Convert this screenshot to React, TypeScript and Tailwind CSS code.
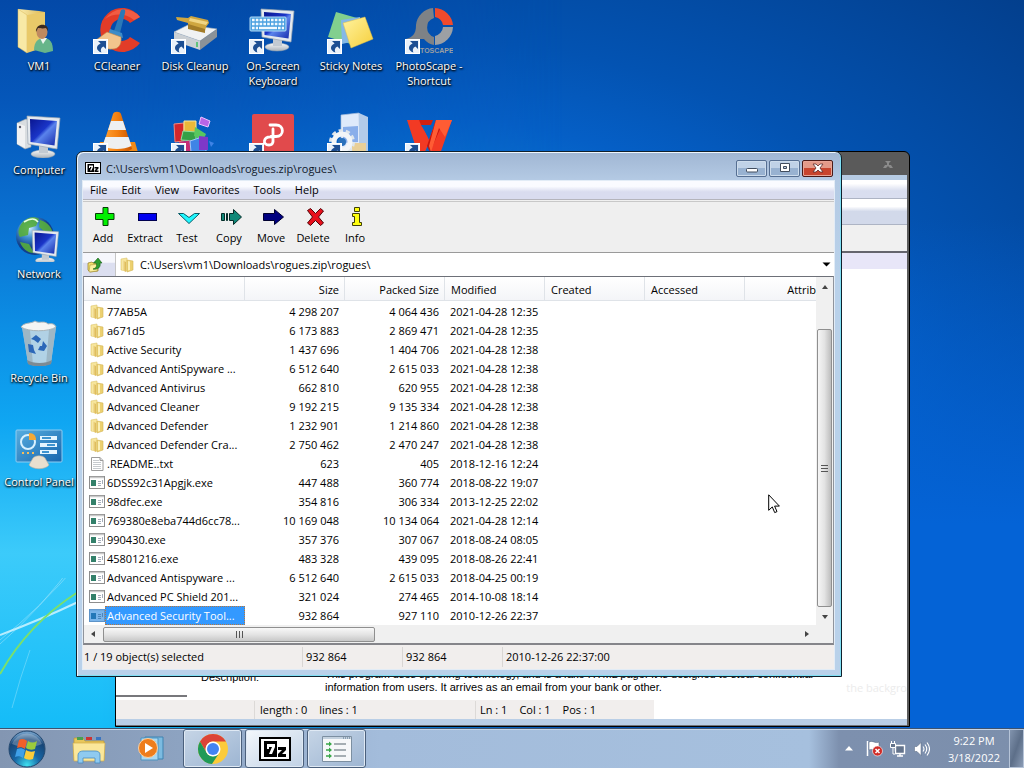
import React from "react";

type Entry = { name: string; size: string; packed: string; modified: string; kind: "folder" | "text" | "exe" };

const entries: Entry[] = [
  { name: "77AB5A", size: "4 298 207", packed: "4 064 436", modified: "2021-04-28 12:35", kind: "folder" },
  { name: "a671d5", size: "6 173 883", packed: "2 869 471", modified: "2021-04-28 12:35", kind: "folder" },
  { name: "Active Security", size: "1 437 696", packed: "1 404 706", modified: "2021-04-28 12:38", kind: "folder" },
  { name: "Advanced AntiSpyware ...", size: "6 512 640", packed: "2 615 033", modified: "2021-04-28 12:38", kind: "folder" },
  { name: "Advanced Antivirus", size: "662 810", packed: "620 955", modified: "2021-04-28 12:38", kind: "folder" },
  { name: "Advanced Cleaner", size: "9 192 215", packed: "9 135 334", modified: "2021-04-28 12:38", kind: "folder" },
  { name: "Advanced Defender", size: "1 232 901", packed: "1 214 860", modified: "2021-04-28 12:38", kind: "folder" },
  { name: "Advanced Defender Cra...", size: "2 750 462", packed: "2 470 247", modified: "2021-04-28 12:38", kind: "folder" },
  { name: ".README..txt", size: "623", packed: "405", modified: "2018-12-16 12:24", kind: "text" },
  { name: "6DSS92c31Apgjk.exe", size: "447 488", packed: "360 774", modified: "2018-08-22 19:07", kind: "exe" },
  { name: "98dfec.exe", size: "354 816", packed: "306 334", modified: "2013-12-25 22:02", kind: "exe" },
  { name: "769380e8eba744d6cc78...", size: "10 169 048", packed: "10 134 064", modified: "2021-04-28 12:14", kind: "exe" },
  { name: "990430.exe", size: "357 376", packed: "307 067", modified: "2018-08-24 08:05", kind: "exe" },
  { name: "45801216.exe", size: "483 328", packed: "439 095", modified: "2018-08-26 22:41", kind: "exe" },
  { name: "Advanced Antispyware ...", size: "6 512 640", packed: "2 615 033", modified: "2018-04-25 00:19", kind: "exe" },
  { name: "Advanced PC Shield 201...", size: "321 024", packed: "274 465", modified: "2014-10-08 18:14", kind: "exe" },
  { name: "Advanced Security Tool...", size: "932 864", packed: "927 110", modified: "2010-12-26 22:37", kind: "exe" },
];
const selectedIndex = entries.length - 1;

/* ---------- shared gradients ---------- */

function Gradients() {
  return (
    <svg className="absolute size-0" aria-hidden="true">
      <defs>
        <linearGradient id="folder" x1="0" x2="1"><stop offset="0" stopColor="#fbeeb0" /><stop offset="1" stopColor="#dcb652" /></linearGradient>
        <linearGradient id="screen" x1="0" x2="1" y2="1"><stop offset="0" stopColor="#0a1690" /><stop offset=".45" stopColor="#1a35c8" /><stop offset=".55" stopColor="#5a83ec" /><stop offset="1" stopColor="#1528a8" /></linearGradient>
        <linearGradient id="metal" x1="0" y1="0" x2="0" y2="1"><stop offset="0" stopColor="#fafafa" /><stop offset="1" stopColor="#a9b2ba" /></linearGradient>
        <radialGradient id="globe" cx=".35" cy=".3"><stop offset="0" stopColor="#d0efff" /><stop offset=".5" stopColor="#3f8ed0" /><stop offset="1" stopColor="#123f8a" /></radialGradient>
        <linearGradient id="cone" x1="0" x2="1"><stop offset="0" stopColor="#ffa53a" /><stop offset=".5" stopColor="#f58110" /><stop offset="1" stopColor="#c85400" /></linearGradient>
        <linearGradient id="panel" x1="0" x2="1" y2="1"><stop offset="0" stopColor="#58aee0" /><stop offset="1" stopColor="#1565ad" /></linearGradient>
        <linearGradient id="note" x1="0" x2="1" y2="1"><stop offset="0" stopColor="#fff3a0" /><stop offset="1" stopColor="#f6cf3c" /></linearGradient>
        <radialGradient id="orb" cx=".5" cy=".95" r=".9"><stop offset="0" stopColor="#3fe0f0" /><stop offset=".4" stopColor="#1767a6" /><stop offset=".8" stopColor="#174576" /><stop offset="1" stopColor="#6f9cc6" /></radialGradient>
      </defs>
    </svg>
  );
}

/* ---------- desktop icons ---------- */

function Art({ children, shortcut = false }: { children: React.ReactNode; shortcut?: boolean }) {
  return (
    <svg viewBox="0 0 48 48" className="size-12" aria-hidden="true">
      {children}
      {shortcut && (
        <g>
          <rect x=".5" y="33.5" width="14" height="14" fill="#e9f1fa" stroke="#fff" />
          <path d="M5 35h8v8l-2.600-2.600c-2.500 1.200-3.200 3.400-2 6.100-5.600-1.800-5.800-7-.8-9z" fill="#1d4f93" />
        </g>
      )}
    </svg>
  );
}

const Monitor = () => (
  <>
    <ellipse cx="30" cy="42" rx="12" ry="4" fill="url(#metal)" stroke="#97a3ae" strokeWidth=".5" />
    <path d="M26 34h9v7h-9z" fill="#c2cad2" />
    <path d="M14 4l33 2-3 31-29-5z" fill="#e4e9ee" stroke="#9aa5b0" strokeWidth=".7" />
    <path d="M17 7l27 2-2.500 24.500L17.500 30z" fill="url(#screen)" />
  </>
);

const desktopArt = {
  user: (
    <Art>
      <path d="M3 3l21 2 6 1v36l-18 3-9-4z" fill="url(#folder)" />
      <path d="M3 3l9 6v38l-9-6z" fill="#f8e9a6" stroke="#d8b75a" strokeWidth=".5" />
      <path d="M12 9l18-3v35l-18 6z" fill="#e9c969" />
      <path d="M19 44c0-8 4-12 10-12s9 5 9 13l-8 2z" fill="#67b58a" />
      <path d="M25 32l3 6 4-6z" fill="#eef5f1" />
      <ellipse cx="27" cy="26" rx="5.500" ry="7" fill="#c08a60" />
      <path d="M21 26c-1-9 13-10 12-1l-2-3c-4 1-6 0-8 0z" fill="#3b2a20" />
    </Art>
  ),
  ccleaner: (
    <Art shortcut>
      <path d="M47 11A22 22 0 1 0 47 37L37 31A11 11 0 1 1 37 17z" fill="#e23c28" />
      <path d="M47 11A22 22 0 0 0 12 13c9-6 20-6 29 1z" fill="#f15c43" />
      <path d="M28 4c3-2 5 0 4 3l-5 20-6-2z" fill="#2a79b8" />
      <path d="M17 23l12 4 1 5-15-4z" fill="#3c8cc8" />
      <path d="M14 26l14 5c1 8-3 12-8 12C13 44 7 40 3 34z" fill="#f2c58d" stroke="#bf8446" strokeWidth=".6" />
    </Art>
  ),
  cleanup: (
    <Art shortcut>
      <path d="M3 26l14-7 29 4-17 12z" fill="#f0f2f3" stroke="#aeb5ba" strokeWidth=".6" />
      <path d="M3 26l26 9v9L3 35z" fill="#cbd0d4" />
      <path d="M29 35l17-12v8L29 44z" fill="#8b9298" />
      <path d="M26 36v5" stroke="#3cc060" strokeWidth="1.500" />
      <path d="M5 11l12 1 3-2 17 4 1 3-3 4-1 4-17-4v-4L6 14z" fill="#cfa640" />
      <path d="M19 12l18 4-2 3-17-4z" fill="#f0d584" />
      <path d="M17 18l17 5v4l-17-4z" fill="#a37c28" />
    </Art>
  ),
  keyboard: (
    <Art shortcut>
      <g transform="translate(-2 -1)"><Monitor /></g>
      <rect x="1" y="11" width="36" height="14" rx="1" fill="#4aa0e0" stroke="#b5dcf6" />
      <path d="M3 14h32M3 18h32M3 22h6M29 22h6" stroke="#f2faff" strokeWidth="2.400" strokeDasharray="2.600 1.200" />
      <path d="M10 22h18" stroke="#f2faff" strokeWidth="2.400" />
    </Art>
  ),
  sticky: (
    <Art shortcut>
      <path d="M9 6l21 6-6 26-23-7z" fill="#82cf8e" />
      <path d="M14 14l19-3 3 22-21 5z" fill="#84b9e6" />
      <path d="M16 17l22-6 8 22-22 9z" fill="url(#note)" stroke="#e3c144" strokeWidth=".5" />
    </Art>
  ),
  photoscape: (
    <Art shortcut>
      <path d="M28 2a19 19 0 0 0-17 17c0 10-4 12-10 14h18a16 16 0 0 0 10 6V31a10 10 0 0 1 0-19z" fill="#7e8286" />
      <path d="M30 2a19 19 0 0 1 18 17H38a10 10 0 0 0-8-8z" fill="#f04a2c" />
      <path d="M48 21a19 19 0 0 1-18 18V30a10 10 0 0 0 8-9z" fill="#9ca0a4" />
      <text x="15" y="47" fontSize="7" fontWeight="700" fontFamily="Liberation Sans, sans-serif" fill="#9a9ea2">TOSCAPE</text>
    </Art>
  ),
  computer: (
    <Art>
      <path d="M2 13l9-4 5 2v26l-6 2-8-5z" fill="#d9dde0" stroke="#9ba2a8" strokeWidth=".6" />
      <path d="M2 13l8 3v22l-8-4z" fill="#f1f2f3" />
      <circle cx="5" cy="17" r="1.200" fill="#556" />
      <g transform="translate(-2 2)"><Monitor /></g>
    </Art>
  ),
  vlc: (
    <Art shortcut>
      <path d="M7 32h35l4 14H2z" fill="#f08a18" />
      <path d="M20 4c1-3 7-3 8 0l11 35c-8 5-22 5-30 0z" fill="url(#cone)" />
      <path d="M18 11h12l3 9H15zM12.500 27h23l3 9c-8 4-21 4-29 0z" fill="#eef0f1" />
    </Art>
  ),
  blocks: (
    <Art shortcut>
      <path d="M3 14l10-1v18l-9 1z" fill="#d3262c" stroke="#f08a80" />
      <path d="M13 11h12v13H13z" fill="#e9b93a" stroke="#f8e8a0" />
      <path d="M12 21l13 1v9l-15-1z" fill="#35a046" stroke="#97dca0" />
      <path d="M24 17l11 7-3 7-9-5z" fill="#58c85f" />
      <path d="M30 7l9 4-2 6-9-3z" fill="#b765e6" stroke="#edc5ff" />
      <path d="M8 32l15-2v12H8z" fill="#c52c75" />
      <path d="M19 31l9-3 7 4v10H20z" fill="#3f84e6" stroke="#9dc9fa" />
      <path d="M28 26l9 1v13h-9z" fill="#7e38c8" />
      <path d="M38 31l5 2-3 4z" fill="#3f84e6" />
    </Art>
  ),
  pdf: (
    <Art shortcut>
      <rect x="3" y="4" width="42" height="44" rx="2" fill="#e14a4c" />
      <path d="M21 15h6c8.500 0 8.500 11.500 0 11.500h-5M24 19v13M23 27c-9-1-10 8-3 8 3 0 4-1.500 4-4" fill="none" stroke="#fff" strokeWidth="2.800" strokeLinecap="round" />
    </Art>
  ),
  setup: (
    <Art shortcut>
      <path d="M14 5l18-2 1 37-19 2z" fill="#dfeafb" stroke="#a9bedb" strokeWidth=".7" />
      <path d="M32 3l9 4v34l-9 2z" fill="#b3cbe9" />
      <path d="M16 17l15-1v16l-15 1z" fill="#89aeea" />
      <path d="M25 33h14v10H25z" fill="#e8cf98" />
      <circle cx="15" cy="32" r="11" fill="none" stroke="#dfe6eb" strokeWidth="4" strokeDasharray="4 2.900" />
      <circle cx="15" cy="32" r="8" fill="none" stroke="#f2f5f7" strokeWidth="5" />
      <circle cx="15" cy="32" r="4" fill="#2a71bb" />
    </Art>
  ),
  wps: (
    <Art shortcut>
      <path d="M2 10h13l9 20 7-20h16L35 44h-7l-5-9-4 9h-6z" fill="#f23a24" />
      <path d="M24 30l7-20h8L25 42l-3-6z" fill="#c6150f" />
      <path d="M31 10h16L40 27l-6-9-8 24-2-6z" fill="#ff5c34" />
      <path d="M16 15h10l-4 10z" fill="#0b63c0" />
      <path d="M14 10h14l-2 5H16z" fill="#d3210f" />
    </Art>
  ),
  network: (
    <Art>
      <circle cx="20" cy="22" r="19" fill="url(#globe)" />
      <path d="M7 9c5-6 12-7 17-4l-3 7-7 2-1 7-8 2c-3-4-1-10 2-14zM25 6c8 2 12 8 13 14l-8-2-6-5zM5 28l9 2 5 9c-7 0-12-5-14-11z" fill="#57ad3c" opacity=".9" />
      <path d="M9 8c8-5 12-3 14 0" stroke="#e8ffe0" strokeWidth="1.500" fill="none" />
      <g transform="translate(6 13) scale(.8)"><Monitor /></g>
    </Art>
  ),
  recycle: (
    <Art>
      <path d="M7 9l34 0-5 36c-6 4-18 4-23 0z" fill="#cfdde5" opacity=".85" />
      <path d="M7 9l6 36 5 2-3-35zM41 9l-5 36-5 2 3-35z" fill="#98b0be" opacity=".8" />
      <path d="M6 9c3-5 10-3 14-6 4 3 9-1 13 3 4-1 7 0 8 3-7 5-28 5-35 0z" fill="#f4f5f4" stroke="#a8b3b8" />
      <path d="M16 21l5-4 5 4-3 4-4-3zM28 23l4 5-3 5-6-1 2-4h2zM21 36l-7-2-1-8 5 1 1 5z" fill="#2c67b8" />
      <path d="M12 42c6 4 19 4 25 0l-1 4c-6 3-18 3-23 0z" fill="#7d8b94" />
    </Art>
  ),
  control: (
    <Art>
      <rect x="1" y="8" width="46" height="32" rx="1" fill="url(#panel)" stroke="#8fcdf2" />
      <circle cx="13" cy="20" r="7" fill="none" stroke="#d8f1ff" strokeWidth="2" />
      <path d="M14 18v-7c5 0 7 3 7 7z" fill="#f6a936" />
      <path d="M7 31h2M12 31h2M17 31h2" stroke="#f6bd5a" strokeWidth="2" />
      <path d="M25 16h17M25 23h17M25 30h17" stroke="#e4f5ff" strokeWidth="4" />
      <path d="M27 16h9M32 23h8M27 30h7" stroke="#3e94d0" strokeWidth="2" />
      <path d="M18 36c3-3 9-3 12 0l4 7c-4 5-16 5-20 0z" fill="#e7dfcf" stroke="#b8b0a0" strokeWidth=".6" />
    </Art>
  ),
};

type Shortcut = { art: keyof typeof desktopArt; label?: string; title: string };

const columns: Shortcut[][] = [
  [
    { art: "user", label: "VM1", title: "VM1" },
    { art: "computer", label: "Computer", title: "Computer" },
    { art: "network", label: "Network", title: "Network" },
    { art: "recycle", label: "Recycle Bin", title: "Recycle Bin" },
    { art: "control", label: "Control Panel", title: "Control Panel" },
  ],
  [{ art: "ccleaner", label: "CCleaner", title: "CCleaner" }, { art: "vlc", title: "Media player" }],
  [{ art: "cleanup", label: "Disk Cleanup", title: "Disk Cleanup" }, { art: "blocks", title: "Defragmenter" }],
  [{ art: "keyboard", label: "On-Screen Keyboard", title: "On-Screen Keyboard" }, { art: "pdf", title: "PDF viewer" }],
  [{ art: "sticky", label: "Sticky Notes", title: "Sticky Notes" }, { art: "setup", title: "Setup" }],
  [{ art: "photoscape", label: "PhotoScape - Shortcut", title: "PhotoScape - Shortcut" }, { art: "wps", title: "Office" }],
];

function DesktopIcon({ item }: { item: Shortcut }) {
  return (
    <button type="button" aria-label={item.title} className="flex h-[104px] w-[78px] flex-col items-center gap-1 text-white">
      {desktopArt[item.art]}
      {item.label && (
        <span className="w-[76px] text-center leading-[15px] [text-shadow:0_1px_2px_#000,1px_1px_2px_#000]">{item.label}</span>
      )}
    </button>
  );
}

/* ---------- small icons ---------- */

function FolderIcon() {
  return (
    <svg viewBox="0 0 16 16" className="size-4 shrink-0" aria-hidden="true">
      <path d="M2 2l6-1v13l-6-1z" fill="#f7e59a" stroke="#dcc46c" strokeWidth=".6" />
      <path d="M8 3l6 1v9l-6 2z" fill="#ecd070" stroke="#d4b657" strokeWidth=".6" />
      <path d="M3 3l4 2v10l-4-2z" fill="url(#folder)" />
      <path d="M9 4l2 .5V13l-2 .5z" fill="#fbf0b8" />
    </svg>
  );
}

function TextIcon() {
  return (
    <svg viewBox="0 0 16 16" className="size-4 shrink-0" aria-hidden="true">
      <path d="M2.500 1.500h8.500l3 3v10h-11.500z" fill="#fff" stroke="#9c9c9c" />
      <path d="M4 4.500h6M4 6.500h8M4 8.500h8M4 10.500h8M4 12.500h8" stroke="#b7bdc2" strokeWidth=".8" />
      <path d="M11 1.500v3h3" fill="#ddd" stroke="#9c9c9c" />
    </svg>
  );
}

function ExeIcon({ selected }: { selected: boolean }) {
  return (
    <svg viewBox="0 0 16 16" className="size-4 shrink-0" aria-hidden="true">
      <rect x=".5" y="1.500" width="15" height="12" fill={selected ? "#7ab4ea" : "#fff"} stroke={selected ? "#5d93c8" : "#8d8d8d"} />
      <path d="M1 2.500h14" stroke={selected ? "#6ea9e0" : "#c9c9c9"} strokeWidth="1.500" />
      <rect x="2" y="5" width="5" height="6" fill={selected ? "#2377b8" : "#33806a"} />
      <path d="M9 6.500h3M9 8.500h3M9 10.500h3M13.500 5v4" stroke={selected ? "#4d86bb" : "#a5aebb"} />
    </svg>
  );
}

function SevenZip({ className }: { className: string }) {
  return (
    <svg viewBox="0 0 32 24" className={className} aria-hidden="true">
      <rect width="32" height="24" fill="#000" />
      <rect x="2" y="2" width="28" height="20" fill="#fff" />
      <rect x="5" y="4" width="13" height="16" fill="#000" />
      <path d="M8 7h8v3l-3 7h-3l3-7h-3v2H8z" fill="#fff" />
      <path d="M19 10h8v3l-4 4h4v3h-8v-3l4-4h-4z" fill="#000" />
    </svg>
  );
}

const toolIcons: { label: string; art: React.ReactNode }[] = [
  { label: "Add", art: <path d="M10 1.500h5v6h6v6h-6v6h-5v-6H2.500v-6H10z" fill="#00f000" stroke="#053b05" /> },
  { label: "Extract", art: <rect x="3.500" y="7.500" width="18" height="7" fill="#0000f0" stroke="#000050" /> },
  { label: "Test", art: <path d="M1.500 7.500h5l5.500 4 5.500-4h5L12 17.500z" fill="#20f8ff" stroke="#075a66" /> },
  { label: "Copy", art: <g fill="#108878" stroke="#042d29"><path d="M2.500 7.500h3v7h-3zM7.500 7.500h1v7h-1zM10.500 7.500h4v-4l8 7.500-8 7.500v-4h-4z" /></g> },
  { label: "Move", art: <path d="M2.500 7.500h11v-4l9 7.500-9 7.500v-4h-11z" fill="#000080" stroke="#000030" /> },
  { label: "Delete", art: <path d="M4.500 4.500l3-2 5 5 5-5 3 2.500-5 6 5 6-3 2.500-5-5-5 5-3-2.500 5-6z" fill="#e8101c" stroke="#500408" /> },
  { label: "Info", art: <g fill="#ffff10" stroke="#3f3f08"><path d="M9.500 1.500h5v4h-5zM7.500 7.500h7v9h2v3h-9v-3h2v-6h-2z" /></g> },
];

/* ---------- archive window ---------- */

function CaptionButtons() {
  return (
    <div className="flex gap-[2px] pr-[2px]">
      <button type="button" aria-label="Minimize" className="flex h-[17px] w-[31px] items-center justify-center rounded-[2px] border border-[#566f92] bg-linear-to-b from-[#c0d2e7] from-45% to-[#98b2d1] to-50% shadow-[inset_0_0_0_1px_#cddcec]">
        <svg viewBox="0 0 12 10" className="h-[10px] w-3"><rect x=".5" y="5.500" width="11" height="3.500" rx="1" fill="#fff" stroke="#414d5e" /></svg>
      </button>
      <button type="button" aria-label="Maximize" className="flex h-[17px] w-[31px] items-center justify-center rounded-[2px] border border-[#566f92] bg-linear-to-b from-[#c0d2e7] from-45% to-[#98b2d1] to-50% shadow-[inset_0_0_0_1px_#cddcec]">
        <svg viewBox="0 0 12 10" className="h-[10px] w-3"><path d="M1.500.5h9v8h-9zM4.500 3.500h3v2h-3z" fill="#fff" fillRule="evenodd" stroke="#414d5e" /></svg>
      </button>
      <button type="button" aria-label="Close" className="flex h-[17px] w-[31px] items-center justify-center rounded-[2px] border border-[#4a1a18] bg-linear-to-b from-[#e49a89] from-45% to-[#c8452e] to-50% shadow-[inset_0_0_0_1px_#e8a596]">
        <svg viewBox="0 0 12 10" className="h-[10px] w-3"><path d="M1 1h3l2 2 2-2h3L8 5l3 4H8L6 7 4 9H1l3-4z" fill="#fff" stroke="#5a2b2b" strokeWidth=".8" /></svg>
      </button>
    </div>
  );
}

function FileTable() {
  const head = "h-[24px] border-r border-b border-[#dfe3e8] bg-linear-to-b from-white to-[#f4f5f8] px-[5px] pt-px font-normal";
  return (
    <table id="files" className="w-full table-fixed border-separate border-spacing-0">
      <colgroup>
        <col className="w-[161px]" />
        <col className="w-[100px]" />
        <col className="w-[100px]" />
        <col className="w-[100px]" />
        <col className="w-[100px]" />
        <col className="w-[100px]" />
        <col />
      </colgroup>
      <thead>
        <tr>
          <th className={`${head} pl-[7px] text-left`}>Name</th>
          <th className={`${head} text-right`}>Size</th>
          <th className={`${head} text-right`}>Packed Size</th>
          <th className={`${head} pl-[6px] text-left`}>Modified</th>
          <th className={`${head} pl-[6px] text-left`}>Created</th>
          <th className={`${head} pl-[6px] text-left`}>Accessed</th>
          <th className="h-[24px] border-b border-[#dfe3e8] bg-linear-to-b from-white to-[#f4f5f8] pt-px text-right font-normal">Attrib</th>
        </tr>
      </thead>
      <tbody>
        <tr aria-hidden="true"><td colSpan={7} className="h-px" /></tr>
        {entries.map((entry, index) => {
          const selected = index === selectedIndex;
          return (
            <tr key={entry.name} className="whitespace-nowrap" aria-selected={selected}>
              <td className="h-[19px] pl-[5px]">
                <span className="flex h-[19px] items-center">
                  {entry.kind === "folder" ? <FolderIcon /> : entry.kind === "text" ? <TextIcon /> : <ExeIcon selected={selected} />}
                  <span className={selected ? "flex h-[19px] flex-1 items-center border border-dotted border-[#b8763a] bg-[#3399ff] px-px text-white" : "px-[2px]"}>
                    {entry.name}
                  </span>
                </span>
              </td>
              <td className="px-[6px] text-right">{entry.size}</td>
              <td className="px-[6px] text-right">{entry.packed}</td>
              <td className="px-[5px]">{entry.modified}</td>
              <td />
              <td />
              <td />
            </tr>
          );
        })}
      </tbody>
    </table>
  );
}

function ArchiveWindow() {
  return (
    <section aria-label="Archive" className="absolute top-[151px] left-[76px] w-[766px] rounded-t-[7px] border border-[#10202c] bg-[linear-gradient(180deg,#a0b6d3_0,#b4cae4_28px,#b9d1ea_120px,#b9d1ea_100%)] pr-[6px] pb-[6px] pl-[5px] shadow-[inset_1px_1px_0_#eef6fd,inset_-1px_-1px_0_#7fe0f5]">
      <header className="flex h-[28px] items-center justify-between rounded-t-[6px] pt-[4px]">
        <h1 className="flex items-center gap-[5px] pl-[3px] text-[#10182a]">
          <SevenZip className="h-3 w-4" />
          {"C:\\Users\\vm1\\Downloads\\rogues.zip\\rogues\\"}
        </h1>
        <CaptionButtons />
      </header>

      <div className="border border-[#e2ecf6] bg-[#f0f0f0]">
        <nav className="flex h-[19px] items-center border-b border-[#b4b4bc] bg-linear-to-b from-[#fafbff] from-30% to-[#d9dcef] to-60%">
          {["File", "Edit", "View", "Favorites", "Tools", "Help"].map((item) => (
            <button key={item} type="button" className="px-[7px] leading-[18px]">{item}</button>
          ))}
        </nav>

        <div className="mt-px flex h-[52px] border-t border-b border-[#9a9a9a] border-t-[#c8c8c8] bg-[#efefef]">
          {toolIcons.map((tool) => (
            <button key={tool.label} type="button" className="flex w-[42px] flex-col items-center pt-[4px] pr-[2px]">
              <svg viewBox="0 0 24 22" className="ml-[3px] h-[22px] w-6" aria-hidden="true">{tool.art}</svg>
              <span className="leading-[19px]">{tool.label}</span>
            </button>
          ))}
        </div>

        <div className="flex h-[23px]">
          <button type="button" aria-label="Up one level" className="flex w-[32px] items-center bg-linear-to-b from-[#f6f7fc] from-40% to-[#dcdff0] to-45% pl-[4px]">
            <svg viewBox="0 0 16 16" className="size-4" aria-hidden="true">
              <path d="M1 6l4-1 1 1h5v8l-8 1-2-2z" fill="#f3e06e" stroke="#8f7a24" strokeWidth=".7" />
              <path d="M3 8l9-1-2 7-8 1z" fill="#fbf0a0" stroke="#a08a30" strokeWidth=".5" />
              <path d="M6 12c4-1 4-4 3-6H6.500L11 1l4 5h-2c1 4-2 7-7 6z" fill="#2f9e2f" stroke="#125a12" strokeWidth=".6" />
            </svg>
          </button>
          <div className="flex flex-1 items-center gap-[5px] border-l border-[#c5c5c5] bg-white pr-[3px] pl-[3px]">
            <FolderIcon />
            <input aria-label="Path" defaultValue={"C:\\Users\\vm1\\Downloads\\rogues.zip\\rogues\\"} className="flex-1 bg-transparent outline-none" />
            <button type="button" aria-label="Show path history">
              <svg viewBox="0 0 9 5" className="h-[5px] w-[9px]"><path d="M.5.5h8l-4 4z" fill="#000" /></svg>
            </button>
          </div>
        </div>

        <div className="flex border border-l-[#90949c] border-t-[#6d7078] border-r-[#90949c] border-b-0 bg-white">
          <div className="min-w-0 flex-1"><FileTable /></div>
          <div role="scrollbar" aria-label="Vertical" aria-controls="files" aria-valuenow={10} className="flex w-[17px] flex-col items-center bg-[#f0f0f0]">
            <svg viewBox="0 0 8 20" className="h-5 w-2"><path d="M1 12l3-4 3 4z" fill="#444" /></svg>
            <div className="mt-[32px] flex w-[15px] flex-1 items-center justify-center rounded-[2px] border border-[#8f8f8f] bg-linear-to-r from-[#f5f5f5] via-[#e3e3e3] to-[#bdbdbd]">
              <svg viewBox="0 0 7 7" className="size-[7px]"><path d="M0 .5h7M0 3.500h7M0 6.500h7" stroke="#555" /></svg>
            </div>
            <svg viewBox="0 0 8 18" className="h-[18px] w-2"><path d="M1 8l3 4 3-4z" fill="#444" /></svg>
          </div>
        </div>
        <div className="flex h-[20px] items-start border-r border-b-2 border-l border-[#90949c] border-b-[#85858a] bg-[#f0f0f0] pt-px pr-[17px]">
          <div role="scrollbar" aria-label="Horizontal" aria-controls="files" aria-valuenow={0} className="flex h-[16px] flex-1 items-center">
            <svg viewBox="0 0 19 8" className="h-2 w-[19px]"><path d="M11 1L7 4l4 3z" fill="#444" /></svg>
            <div className="flex h-[15px] w-[272px] items-center justify-center rounded-[2px] border border-[#8f8f8f] bg-linear-to-b from-[#f8f8f8] via-[#e4e4e4] to-[#c8c8c8]">
              <svg viewBox="0 0 7 7" className="size-[7px]"><path d="M.5 0v7M3.500 0v7M6.500 0v7" stroke="#555" /></svg>
            </div>
            <svg viewBox="0 0 18 8" className="ml-auto h-2 w-[18px]"><path d="M7 1l4 3-4 3z" fill="#444" /></svg>
          </div>
        </div>

        <footer className="flex h-[24px] items-center bg-[#f1eeed]">
          <span className="w-[220px] border-r border-[#d9d6d4] pl-px leading-[20px]">1 / 19 object(s) selected</span>
          <span className="w-[100px] border-r border-[#d9d6d4] pl-[3px] leading-[20px]">932 864</span>
          <span className="w-[100px] border-r border-[#d9d6d4] pl-[3px] leading-[20px]">932 864</span>
          <span className="pl-[3px] leading-[20px]">2010-12-26 22:37:00</span>
        </footer>
      </div>
    </section>
  );
}

/* ---------- window behind ---------- */

function EditorWindow() {
  return (
    <section aria-label="Editor" className="absolute top-[151px] bottom-px left-[115px] flex w-[795px] flex-col rounded-t-[6px] border border-black bg-[#5a5a5a] pr-[2px]">
      <div className="flex h-[23px] justify-end pt-[7px] pr-[13px]">
        <svg viewBox="0 0 12 10" className="h-[10px] w-3" aria-hidden="true"><path d="M1 9l2-3h2V4L3 2h6L7 4v2h2l2 3H8L6 7 4 9z" fill="#8b8b8b" /></svg>
      </div>
      <div className="h-[5px] bg-[#b6cbe3]" />
      <div className="h-[19px] border-b border-[#adb4c4] bg-linear-to-b from-white from-20% to-[#d9deef] to-60%" />
      <div className="h-[26px] border-b border-[#adb4c4] bg-linear-to-b from-white from-30% to-[#d2d9ea] to-50%" />
      <div className="h-[28px] border-b-2 border-[#65656d] bg-[#f0f0f0]" />
      <div className="h-[16px] bg-[#e8e6f8]" />
      <div className="flex flex-1 flex-col justify-end bg-white">
        <div className="flex">
          <div className="flex w-[71px] flex-col justify-end"><div className="h-[2px] bg-[#77777b]" /></div>
          <div className="flex flex-1 justify-between pb-[3px] pl-[14px] leading-[13px]">
            <dl className="flex font-['Liberation_Sans',sans-serif]">
              <dt className="w-[124px] pt-[3px]">Description:</dt>
              <dd>
                This program uses spoofing technology, and is a fake HTML page. It is designed to steal confidential
                <br />
                information from users. It arrives as an email from your bank or other.
              </dd>
            </dl>
            <span className="self-end text-[#ececec]">the backgro</span>
          </div>
        </div>
      </div>
      <div className="bg-white pt-[3px]">
        <footer className="flex h-[19px] w-[538px] items-center bg-[#f1eeed] leading-[18px]">
          <span className="w-[139px] border-r border-[#dcd9d7]">&nbsp;</span>
          <span className="flex w-[221px] gap-3 border-r border-[#dcd9d7] pl-[5px]"><span>length : 0</span><span>lines : 1</span></span>
          <span className="flex gap-3 pl-[4px]"><span>Ln : 1</span><span>Col : 1</span><span>Pos : 1</span></span>
        </footer>
      </div>
      <div className="h-[7px] border-b border-[#70757c] bg-[#b9cee6]" />
    </section>
  );
}

/* ---------- wallpaper ---------- */

function Wallpaper() {
  return (
    <>
      <div className="absolute inset-0 bg-[radial-gradient(ellipse_at_40%_55%,#1ea0ee_0%,#0a76d4_35%,#055fc6_50%,#0353b2_64%,#033f8d_100%)]" />
      <div className="absolute inset-0 bg-[linear-gradient(180deg,#0349a8_0%,#0557ba_14%,#0a70d0_30%,#0c8ee4_45%,#0fa6f2_58%,#3ccbfa_76%,#14bcf8_100%)] [mask-image:linear-gradient(90deg,#000_10%,transparent_55%)]" />
      <div className="absolute right-0 bottom-0 h-[70%] w-[15%] bg-linear-to-t from-[#0463d6] from-40% to-transparent" />
      <svg viewBox="0 0 116 150" className="absolute bottom-0 left-0 h-[150px] w-[116px]" aria-hidden="true">
        <path d="M0 66Q40 32 78 -20" stroke="#a8e8fc" strokeWidth="1" fill="none" opacity=".5" />
        <path d="M0 62Q40 30 78 -14" stroke="#a8e8fc" strokeWidth="1" fill="none" opacity=".5" />
        <path d="M0 57Q40 42 78 24" stroke="#d9f6ff" strokeWidth="2" fill="none" opacity=".8" />
        <path d="M0 96Q28 46 78 14" stroke="#7be06a" strokeWidth="2" fill="none" />
        <path d="M12 130Q20 100 30 72" stroke="#7fdcfa" strokeWidth="1" fill="none" opacity=".6" />
      </svg>
    </>
  );
}

/* ---------- taskbar ---------- */

function Taskbar() {
  const running = "flex h-full w-[59px] items-center justify-center rounded-[3px] border border-[#4b607c] shadow-[inset_0_0_0_1px_#dfe9f4]";
  return (
    <footer className="relative flex h-10 items-stretch border-t border-[#3d5370] bg-[linear-gradient(90deg,#8396b2_0,#8da3c1_180px,#a3bcdb_380px,#a6c0de_calc(100%-215px),#7d90ae_calc(100%-185px),#7c8fac_100%)] shadow-[inset_0_1px_0_#c6d6e8]">
      <button type="button" aria-label="Start" className="flex w-[54px] items-center justify-center">
        <svg viewBox="0 0 38 38" className="size-[38px]" aria-hidden="true">
          <circle cx="19" cy="19" r="18" fill="url(#orb)" stroke="#24486f" />
          <path d="M4 14a16 16 0 0 1 30 0c-8 4-22 4-30 0z" fill="#fff" opacity=".25" />
          <path d="M11 10c3-2 6-1 8 1l-2 8c-3-2-5-2-8-1z" fill="#f0602a" />
          <path d="M20 11c3 2 6 2 9 0l-2 8c-3 1-6 1-9-1z" fill="#9bcb3c" />
          <path d="M9 19c3-1 5-1 8 1l-2 8c-3-2-5-2-8-1z" fill="#3fa0e8" />
          <path d="M18 20c3 2 6 2 9 1l-2 8c-3 1-6 1-9-1z" fill="#fbcc3a" />
        </svg>
      </button>
      <button type="button" aria-label="File explorer" className="flex w-[70px] items-center justify-center">
        <svg viewBox="0 0 34 30" className="h-[30px] w-[34px]" aria-hidden="true">
          <path d="M2 4h9l2 3h19v19H2z" fill="#e8c75a" stroke="#b99634" strokeWidth=".7" />
          <path d="M5 3h6v3H5z" fill="#4aa050" /><path d="M14 3h6v3h-6z" fill="#c33" /><path d="M24 3h5v3h-5z" fill="#3a74c0" />
          <path d="M1 9h32l-1 18H2z" fill="#fbe79a" stroke="#d3ae48" strokeWidth=".7" />
          <path d="M6 29V21c0-3 3-4 5-4h12c3 0 5 1 5 4v8h-5v-5H11v5z" fill="#8fcaf0" stroke="#478cc2" strokeWidth=".8" />
        </svg>
      </button>
      <button type="button" aria-label="Media player" className="flex w-[53px] items-center justify-center">
        <svg viewBox="0 0 28 26" className="h-[26px] w-7" aria-hidden="true">
          <path d="M8 1h18v22H8z" fill="#7cbbe0" stroke="#3e83b1" /><path d="M4 2h17v22H4z" fill="#a9d8f1" stroke="#4c93c0" />
          <circle cx="11" cy="12" r="9.500" fill="#ee7d1c" stroke="#fbd0a0" strokeWidth="1" />
          <path d="M8 7l8 5-8 5z" fill="#fff" />
        </svg>
      </button>
      <div className="flex gap-[3px] pl-[6px]">
        <button type="button" aria-label="Browser" className={`${running} bg-linear-to-br from-[#c6d5e6] to-[#9db5d2]`}>
          <svg viewBox="0 0 32 32" className="size-8" aria-hidden="true">
            <circle cx="16" cy="16" r="15" fill="#fccb3a" />
            <path d="M3 8.500A15 15 0 0 1 29 8.500H16a7.500 7.500 0 0 0-6.500 11z" fill="#dc4437" />
            <path d="M3 8.500A15 15 0 0 0 15 31l7.500-11.500a7.500 7.500 0 0 1-13 0z" fill="#209a58" />
            <circle cx="16" cy="16" r="7.500" fill="#fff" />
            <circle cx="16" cy="16" r="6" fill="#4484f3" />
          </svg>
        </button>
        <button type="button" aria-label="Archiver" className={`${running} bg-linear-to-br from-[#f4f8fc] to-[#c0d1e5]`}>
          <SevenZip className="h-6 w-8" />
        </button>
        <button type="button" aria-label="Task list" className={`${running} bg-linear-to-br from-[#c6d5e6] to-[#9db5d2]`}>
          <svg viewBox="0 0 30 26" className="h-[26px] w-[30px]" aria-hidden="true">
            <path d="M.5.5h29v25H.5z" fill="#f6f8f9" stroke="#7c8fa1" />
            <path d="M1 2h28" stroke="#c4d2df" strokeWidth="2" /><path d="M21 2h7" stroke="#516a83" strokeDasharray="1 1" />
            <path d="M12 8h12M12 14h12M12 20h12" stroke="#55646f" strokeWidth="1.200" />
            <path d="M4 8h4M4 14h4M4 20h4" stroke="#39a648" strokeWidth="1.500" /><path d="M7 5.500l3 2.500-3 2.500zM7 11.500l3 2.500-3 2.500zM7 17.500l3 2.500-3 2.500z" fill="#39a648" />
          </svg>
        </button>
      </div>
      <div className="ml-auto flex items-center text-white">
        <button type="button" aria-label="Show hidden icons" className="mr-[13px]">
          <svg viewBox="0 0 8 5" className="h-[5px] w-2"><path d="M0 4.500h8L4 0z" fill="#fff" /></svg>
        </button>
        <button type="button" aria-label="Action center" className="mr-[7px]">
          <svg viewBox="0 0 17 17" className="size-[17px]">
            <path d="M1.500 1v15" stroke="#fff" strokeWidth="1.500" /><path d="M3 2c4-2 6 2 10 0v8c-4 2-6-2-10 0z" fill="#fff" stroke="#4d5c74" strokeWidth=".5" />
            <circle cx="11.500" cy="11" r="5" fill="#d02b26" stroke="#fff" strokeWidth=".6" /><path d="M9.500 9l4 4M13.500 9l-4 4" stroke="#fff" strokeWidth="1.500" />
          </svg>
        </button>
        <button type="button" aria-label="Network status" className="mr-[8px]">
          <svg viewBox="0 0 16 16" className="size-4">
            <path d="M5.500 4.500h9v8h-9zM7 15h6M10 12v3" fill="#64748c" stroke="#fff" strokeWidth="1.400" />
            <path d="M.5 2.500h5v4h-5zM1.500 0v3M4.500 0v3M3 6v7h2" fill="#64748c" stroke="#fff" />
          </svg>
        </button>
        <button type="button" aria-label="Volume" className="mr-[17px]">
          <svg viewBox="0 0 16 16" className="size-4">
            <path d="M.5 5.500H3l4-4v13l-4-4H.5z" fill="#fff" stroke="#55657c" strokeWidth=".5" />
            <path d="M9 5.500q2 2.500 0 5M11 3.500q3.500 4.500 0 9M13 1.500q5 6.500 0 13" fill="none" stroke="#fff" strokeWidth="1.100" />
          </svg>
        </button>
        <time className="w-[54px] text-center leading-[17px]">9:22 PM<br />3/18/2022</time>
        <button type="button" aria-label="Show desktop" className="ml-[8px] h-full w-[15px] border border-[#b6c4d8] bg-linear-to-br from-[#8294ae] via-[#5d6f89] to-[#8b9cb5]" />
      </div>
    </footer>
  );
}

export default function App() {
  return (
    <main className="flex min-h-screen flex-col overflow-hidden font-['Open_Sans','Noto_Sans',sans-serif] text-[11px] leading-[15px] text-black">
      <Gradients />
      <div className="relative flex-1 overflow-hidden">
        <Wallpaper />
        <div className="relative flex pt-[6px]">
          {columns.map((column, index) => (
            <div key={index} className="flex flex-col">
              {column.map((item) => <DesktopIcon key={item.title} item={item} />)}
            </div>
          ))}
        </div>
        <EditorWindow />
        <ArchiveWindow />
        <svg viewBox="0 0 12 20" className="absolute top-[494px] left-[768px] h-5 w-3" aria-hidden="true">
          <path d="M.7.8v15.500l3.600-3.400 2.400 5.700 2.300-1-2.400-5.500h4.800z" fill="#fff" stroke="#000" />
        </svg>
      </div>
      <Taskbar />
    </main>
  );
}
